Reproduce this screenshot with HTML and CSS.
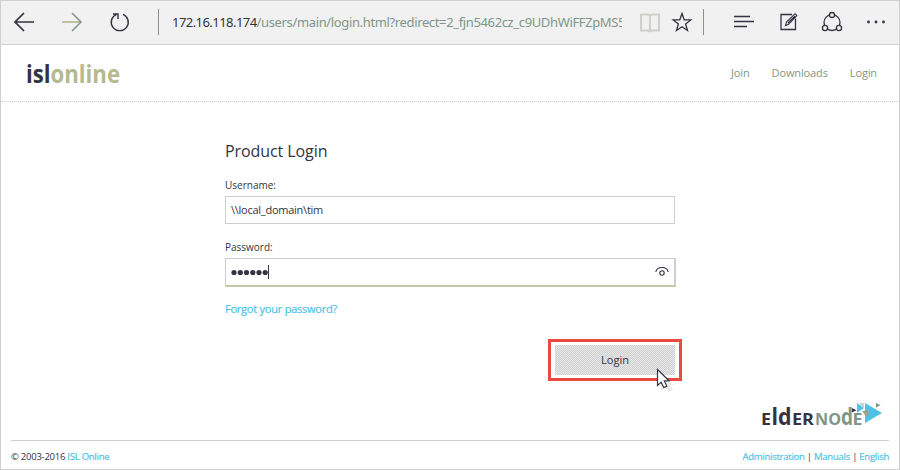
FILE: index.html
```html
<!DOCTYPE html>
<html lang="en">
<head>
<meta charset="utf-8">
<title>Product Login</title>
<link rel="stylesheet" href="styles.css">
</head>
<body>
<div class="window">
  <div class="toolbar">
    <svg class="nav-icons" width="158" height="43" viewBox="1 1 158 43" fill="none">
      <path d="M34 22H15.500M24 13l-9 9 9 9" stroke="#333342" stroke-width="1.700"/>
      <path d="M62 22h18" stroke="#b3ba90" stroke-width="1.700"/>
      <path d="M72 13l9 9-9 9" stroke="#809788" stroke-width="1.500"/>
      <path d="M123 14.300a8.500 8.500 0 1 1-6.500 0M113 14h5v5" stroke="#333342" stroke-width="1.400"/>
      <path d="M158.500 9v26" stroke="#809788"/>
    </svg>
    <div class="address"><span class="host">172.16.118.174</span>/users/main/login.html?redirect=2_fjn5462cz_c9UDhWiFFZpMS5</div>
    <svg class="tool-icons" width="269" height="43" viewBox="630 1 269 43" fill="none" stroke="#333342" stroke-width="1.300">
      <path d="M641 14.500h7l2 1 2-1h7v16h-7l-2 1-2-1h-7zM650 15v15" stroke="#cfcfcb" stroke-width="2"/>
      <path d="M682 13.500l2.200 6.300 6.600.1-5.200 4.100 1.900 6.500-5.500-3.800-5.500 3.800 1.900-6.500-5.200-4.100 6.600-.1z"/>
      <path d="M703.500 9v26" stroke="#809788" stroke-width="1"/>
      <path d="M734 16.500h16M734 21.500h20M734 26.500h13"/>
      <path d="M792 14.500h-11v15h14.500v-11"/><path d="M785.500 25.500l1-3.500 8.500-8.300 1.900 1.900-8.300 8.700zM788 23l7-7" stroke-width="1.100"/>
      <circle cx="832" cy="22.500" r="8"/>
      <g fill="#f1f1f1"><circle cx="832" cy="15" r="2.500"/><circle cx="825" cy="28" r="2.600"/><circle cx="839" cy="28" r="2.600"/></g>
      <g fill="#333342" stroke="none"><circle cx="868.500" cy="22" r="1.400"/><circle cx="876" cy="22" r="1.400"/><circle cx="883.500" cy="22" r="1.400"/></g>
    </svg>
  </div>
  <header class="header">
    <svg class="brand" width="100" height="40" viewBox="0 0 100 40"><text x="0" y="30" textLength="94" lengthAdjust="spacingAndGlyphs">isl<tspan class="brand-online">online</tspan></text></svg>
    <nav class="menu"><a>Join</a><a>Downloads</a><a>Login</a></nav>
  </header>
  <main class="login">
    <h1>Product Login</h1>
    <label>Username:</label>
    <div class="field">\\local_domain\tim</div>
    <label>Password:</label>
    <div class="field focused">
      <svg width="42" height="16" viewBox="0 0 42 16" fill="#333342"><circle cx="3" cy="8.500" r="2.600"/><circle cx="9.300" cy="8.500" r="2.600"/><circle cx="15.500" cy="8.500" r="2.600"/><circle cx="21.800" cy="8.500" r="2.600"/><circle cx="28" cy="8.500" r="2.600"/><circle cx="34.200" cy="8.500" r="2.600"/><path d="M37 1h1v14h-1z"/></svg>
      <svg width="14" height="12" viewBox="0 0 14 12" fill="none" stroke="#333342" stroke-width="1.100"><path d="M.800 6C2 0 12 0 13.200 6"/><circle cx="7" cy="7" r="2.200"/></svg>
    </div>
    <a class="forgot">Forgot your password?</a>
    <div class="highlight"><div class="button">Login</div>
      <svg class="cursor" width="20" height="26" viewBox="0 0 20 26"><path class="shadow" d="M5 6v17l4-4 3 5 5-2-3-5h4z"/><path d="M1.500 1.500v16l3.600-3.300 2.700 5.300 3-1.400-2.500-5.200 4.700-.2z" fill="#fff" stroke="#333342" stroke-width="1.200"/></svg>
    </div>
  </main>
  <svg class="elder" width="124" height="32" viewBox="760 398 124 32">
    <g class="elder-word">
      <text x="761" y="424.500" textLength="10" lengthAdjust="spacingAndGlyphs">E</text>
      <text class="tall" x="771.500" y="424.500" textLength="20" lengthAdjust="spacingAndGlyphs">ld</text>
      <text x="792" y="424.500" textLength="22" lengthAdjust="spacingAndGlyphs">ER</text>
      <g class="node">
        <text x="815" y="424.500" textLength="26" lengthAdjust="spacingAndGlyphs">NO</text>
        <text class="tall" x="841" y="424.500" textLength="12" lengthAdjust="spacingAndGlyphs">d</text>
        <text x="852.500" y="424.500" textLength="10" lengthAdjust="spacingAndGlyphs">E</text>
      </g>
    </g>
    <path d="M865 403l17 10-17 10z" fill="#4fc1e6"/>
    <path d="M857 403l7 5-7 5z" fill="#4fc1e6"/>
    <path d="M859 403h5v6z" fill="#cfcfcf"/>
    <path d="M852 408l4.500 2.200-4.500 2.300z" fill="#333342"/>
    <path d="M876 403l4.500 2.200-4.500 2.300z" fill="#809788"/>
    <path d="M862 411l7-1-1 7-3-2z" fill="#a0a08c"/>
  </svg>
  <footer class="footer"><div>© 2003-2016 <a>ISL Online</a></div><div class="links"><a>Administration</a> | <a>Manuals</a> | <a>English</a></div></footer>
</div>
</body>
</html>
```
FILE: styles.css
```css
* { box-sizing: border-box; }
body { margin: 0; font-family: "Open Sans", sans-serif; color: #333342; }
.window { width: 900px; height: 470px; border: 1px solid #cfcfcf; background: #fff; display: flex; flex-direction: column; }
.toolbar { height: 44px; flex: none; background: #f1f1f1; border-bottom: 1px solid #cfcfcf; display: flex; }
.toolbar svg { flex: none; }
.address { width: 450px; margin-left: 13px; margin-right: 8px; overflow: hidden; white-space: nowrap; font-family: "Noto Sans", sans-serif; font-size: 13px; letter-spacing: -.36px; line-height: 42px; color: #809788; }
.host { color: #333342; letter-spacing: -.55px; }
.header { height: 57px; flex: none; border-bottom: 1px dotted #cfcfcf; display: flex; justify-content: space-between; align-items: center; padding: 0 22px 0 25px; }
.brand text { font-family: "Open Sans", sans-serif; font-size: 25px; font-weight: 700; fill: #333342; }
.brand .brand-online { fill: #b3ba90; }
.menu { display: flex; gap: 22px; font-size: 11px; letter-spacing: -.13px; color: #809788; margin-top: -2px; }
.login { width: 451px; margin-left: 224px; padding-top: 38px; display: flex; flex-direction: column; }
h1 { margin: 0 0 16px; font-size: 16px; letter-spacing: -.08px; font-weight: 400; line-height: 22px; }
label { font-size: 10px; line-height: 14px; margin-bottom: 4px; }
.field { width: 450px; height: 28px; border: 1px solid #cfcfcf; padding: 0 5px; font-size: 11px; letter-spacing: -.25px; line-height: 26px; margin-bottom: 16px; display: flex; align-items: center; }
.focused { width: 451px; height: 29px; justify-content: space-between; border-right-width: 2px; border-bottom: 2px solid #c1c8aa; margin-bottom: 14px; }
.forgot { font-size: 11px; letter-spacing: -.23px; line-height: 16px; color: #4fc1e6; -webkit-text-stroke: .2px #4fc1e6; }
.highlight { position: relative; width: 134px; height: 42px; margin: 22px 0 0 323px; border: 3px solid #eb4a43; padding: 3px 4px; }
.button { height: 30px; background: repeating-conic-gradient(#cfcfcf 0 25%, #e9e9e9 0 50%) 0 0 / 2px 2px; text-align: center; font-size: 11px; line-height: 30px; }
.cursor { position: absolute; left: 105px; top: 26px; }
.shadow { fill: #ebebeb; }
.elder { margin: 17px 0 0 759px; flex: none; }
.elder-word { font-family: "Open Sans", sans-serif; font-size: 16px; font-weight: 700; fill: #333342; }
.elder-word .tall { font-size: 23px; }
.elder-word .node { fill: #809788; }
.footer { margin: 10px 10px 0; border-top: 1px solid #cfcfcf; display: flex; justify-content: space-between; font-size: 9.5px; letter-spacing: -.25px; line-height: 14px; padding-top: 9px; }
.footer a { color: #4fc1e6; -webkit-text-stroke: .2px #4fc1e6; }
```
